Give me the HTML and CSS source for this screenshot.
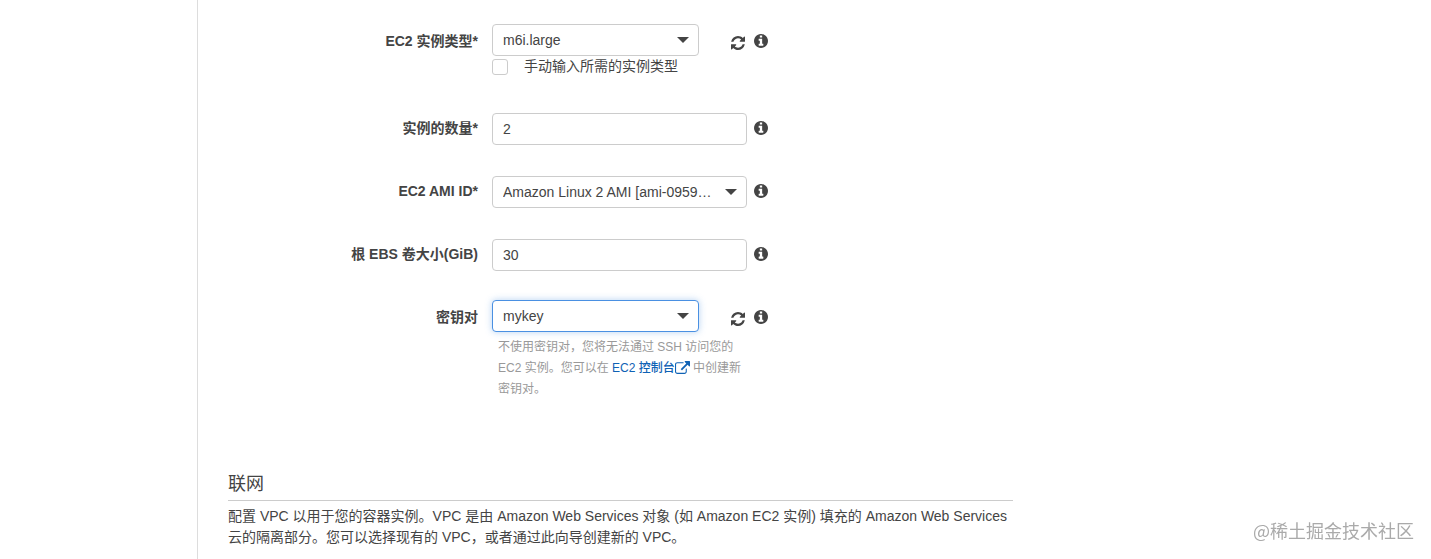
FILE: index.html
```html
<!DOCTYPE html>
<html lang="zh-CN">
<head>
    <meta charset="UTF-8">
    <meta name="viewport" content="width=device-width, initial-scale=1.0">
    <title>创建集群</title>
    <link rel="stylesheet" href="styles.css">
</head>
<body>

    <svg class="sprite" aria-hidden="true">
        <symbol id="icon-info" viewBox="128 128 1536 1536">
            <path d="M1152 1376v-160q0-14-9-23t-23-9h-96v-512q0-14-9-23t-23-9h-320q-14 0-23 9t-9 23v160q0 14 9 23t23 9h96v320h-96q-14 0-23 9t-9 23v160q0 14 9 23t23 9h448q14 0 23-9t9-23zm-128-896v-160q0-14-9-23t-23-9h-192q-14 0-23 9t-9 23v160q0 14 9 23t23 9h192q14 0 23-9t9-23zm640 416q0 209-103 385.500t-279.500 279.500-385.500 103-385.500-103-279.500-279.500-103-385.500 103-385.500 279.500-279.500 385.500-103 385.500 103 279.500 279.500 103 385.500z"/>
        </symbol>
        <symbol id="icon-refresh" viewBox="128 128 1536 1536">
            <path d="M1639 1056q0 5-1 7-64 268-268 434.500t-478 166.500q-146 0-282.500-55t-243.500-157l-129 129q-19 19-45 19t-45-19-19-45v-448q0-26 19-45t45-19h448q26 0 45 19t19 45-19 45l-137 137q71 66 161 102t187 36q134 0 250-65t186-179q11-17 53-117 8-23 30-23h192q13 0 22.500 9.500t9.500 22.500zm25-800v448q0 26-19 45t-45 19h-448q-26 0-45-19t-19-45 19-45l138-138q-148-137-349-137-134 0-250 65t-186 179q-11 17-53 117-8 23-30 23h-199q-13 0-22.500-9.500t-9.500-22.500v-7q65-268 270-434.500t480-166.500q146 0 284 55.500t245 156.500l130-129q19-19 45-19t45 19 19 45z"/>
        </symbol>
        <symbol id="icon-external" viewBox="0 0 1792 1536">
            <path d="M1408 928v320q0 119-84.500 203.500t-203.500 84.500h-832q-119 0-203.500-84.500t-84.500-203.500v-832q0-119 84.500-203.500t203.500-84.500h704q14 0 23 9t9 23v64q0 14-9 23t-23 9h-704q-66 0-113 47t-47 113v832q0 66 47 113t113 47h832q66 0 113-47t47-113v-320q0-14 9-23t23-9h64q14 0 23 9t9 23zm384-864v512q0 26-19 45t-45 19-45-19l-176-176-652 652q-10 10-23 10t-23-10l-114-114q-10-10-10-23t10-23l652-652-176-176q-19-19-19-45t19-45 45-19h512q26 0 45 19t19 45z"/>
        </symbol>
    </svg>

    <main class="content">
        <form class="instance-form">
            <div class="field field-refresh">
                <label class="field-label" for="instanceType">EC2 实例类型*</label>
                <div class="field-body">
                    <div class="control-row">
                        <div class="select">
                            <select id="instanceType">
                                <option>m6i.large</option>
                            </select>
                        </div>
                        <button type="button" class="icon-button" aria-label="刷新"><svg class="icon"><use href="#icon-refresh"/></svg></button>
                    </div>
                    <label class="check">
                        <input type="checkbox">
                        手动输入所需的实例类型
                    </label>
                </div>
                <button type="button" class="icon-button" aria-label="信息"><svg class="icon"><use href="#icon-info"/></svg></button>
            </div>

            <div class="field">
                <label class="field-label" for="instanceCount">实例的数量*</label>
                <div class="field-body">
                    <input class="text-input" type="text" id="instanceCount" value="2">
                </div>
                <button type="button" class="icon-button" aria-label="信息"><svg class="icon"><use href="#icon-info"/></svg></button>
            </div>

            <div class="field">
                <label class="field-label" for="amiId">EC2 AMI ID*</label>
                <div class="field-body">
                    <div class="select">
                        <select id="amiId">
                            <option>Amazon Linux 2 AMI [ami-0959…</option>
                        </select>
                    </div>
                </div>
                <button type="button" class="icon-button" aria-label="信息"><svg class="icon"><use href="#icon-info"/></svg></button>
            </div>

            <div class="field">
                <label class="field-label" for="ebsSize">根 EBS 卷大小(GiB)</label>
                <div class="field-body">
                    <input class="text-input" type="text" id="ebsSize" value="30">
                </div>
                <button type="button" class="icon-button" aria-label="信息"><svg class="icon"><use href="#icon-info"/></svg></button>
            </div>

            <div class="field field-refresh">
                <label class="field-label" for="keyPair">密钥对</label>
                <div class="field-body">
                    <div class="control-row">
                        <div class="select">
                            <select id="keyPair" class="active">
                                <option>mykey</option>
                            </select>
                        </div>
                        <button type="button" class="icon-button" aria-label="刷新"><svg class="icon"><use href="#icon-refresh"/></svg></button>
                    </div>
                    <p class="hint">不使用密钥对，您将无法通过 SSH 访问您的 EC2 实例。您可以在 <a href="#">EC2 控制台<svg class="icon-external"><use href="#icon-external"/></svg></a> 中创建新密钥对。</p>
                </div>
                <button type="button" class="icon-button" aria-label="信息"><svg class="icon"><use href="#icon-info"/></svg></button>
            </div>
        </form>

        <section class="network">
            <h2>联网</h2>
            <p>配置 VPC 以用于您的容器实例。VPC 是由 Amazon Web Services 对象 (如 Amazon EC2 实例) 填充的 Amazon Web Services 云的隔离部分。您可以选择现有的 VPC，或者通过此向导创建新的 VPC。</p>
        </section>
    </main>

    <div class="watermark">@稀土掘金技术社区</div>

</body>
</html>
```

FILE: styles.css
```css
* {
    box-sizing: border-box;
}
body {
    margin: 0;
    background-color: #fff;
    font-family: "Liberation Sans", "Noto Sans CJK SC", sans-serif;
    font-size: 14px;
    line-height: 21px;
    color: #444;
}
.sprite {
    display: none;
}
.content {
    margin-left: 197px;
    padding: 26px 30px 0;
    border-left: 1px solid #ddd;
    min-height: 100vh;
}
.instance-form,
.network {
    max-width: 785px;
}

/* form rows */
.field {
    display: flex;
    align-items: flex-start;
    margin-bottom: 31px;
    line-height: 30px;
}
.field-refresh {
    margin-top: -2px;
    line-height: 34px;
}
.field-label {
    width: 250px;
    margin-right: 14px;
    text-align: right;
    font-weight: bold;
}
.field-body {
    width: 255px;
    margin-right: 7px;
}
.control-row {
    display: flex;
    justify-content: space-between;
}
.control-row .select {
    width: 207px;
}
.select {
    position: relative;
}
.select::after {
    content: "";
    position: absolute;
    top: 13px;
    right: 10px;
    border: 6px solid transparent;
    border-top-color: #444;
    border-bottom: 0;
    pointer-events: none;
}
.text-input,
.select select {
    display: block;
    width: 100%;
    height: 32px;
    padding: 0 10px;
    border: 1px solid #ccc;
    border-radius: 4px;
    background-color: #fff;
    font: inherit;
    line-height: 21px;
    color: #444;
    appearance: none;
}
.select select.active {
    border-color: #4a90e2;
    box-shadow: 0 0 7px rgba(74, 144, 226, 0.4);
}
.icon-button {
    display: flex;
    align-items: center;
    height: 30px;
    padding: 0;
    border: none;
    background: none;
    color: #444;
    cursor: pointer;
}
.field-refresh > .icon-button {
    height: 34px;
}
.control-row .icon-button {
    height: 32px;
    padding: 6px 2px 0 0;
}
.icon {
    width: 14px;
    height: 14px;
    fill: currentColor;
}
.check {
    display: flex;
    align-items: center;
    gap: 16px;
    margin-bottom: 5px;
    line-height: 21px;
}
.check input {
    appearance: none;
    width: 16px;
    height: 16px;
    margin: 0;
    border: 1px solid #ccc;
    border-radius: 3px;
}
.hint {
    margin: 5px 0 0;
    padding-left: 6px;
    font-size: 12px;
    line-height: 21px;
    color: #999;
}
.hint a {
    color: #0f62b5;
    font-weight: 500;
    text-decoration: none;
}
.icon-external {
    width: 15px;
    height: 13px;
    fill: currentColor;
    vertical-align: -2px;
}

/* networking */
.network {
    padding-top: 41px;
}
.network h2 {
    margin: 0 0 5px;
    padding-bottom: 4px;
    border-bottom: 1px solid #ccc;
    font-size: 18px;
    font-weight: normal;
    line-height: 24px;
}
.network p {
    margin: 0;
}

.watermark {
    position: fixed;
    right: 17px;
    bottom: 17px;
    font-family: "Noto Sans CJK SC", sans-serif;
    font-size: 18px;
    line-height: 24px;
    color: #aaa;
}
```
